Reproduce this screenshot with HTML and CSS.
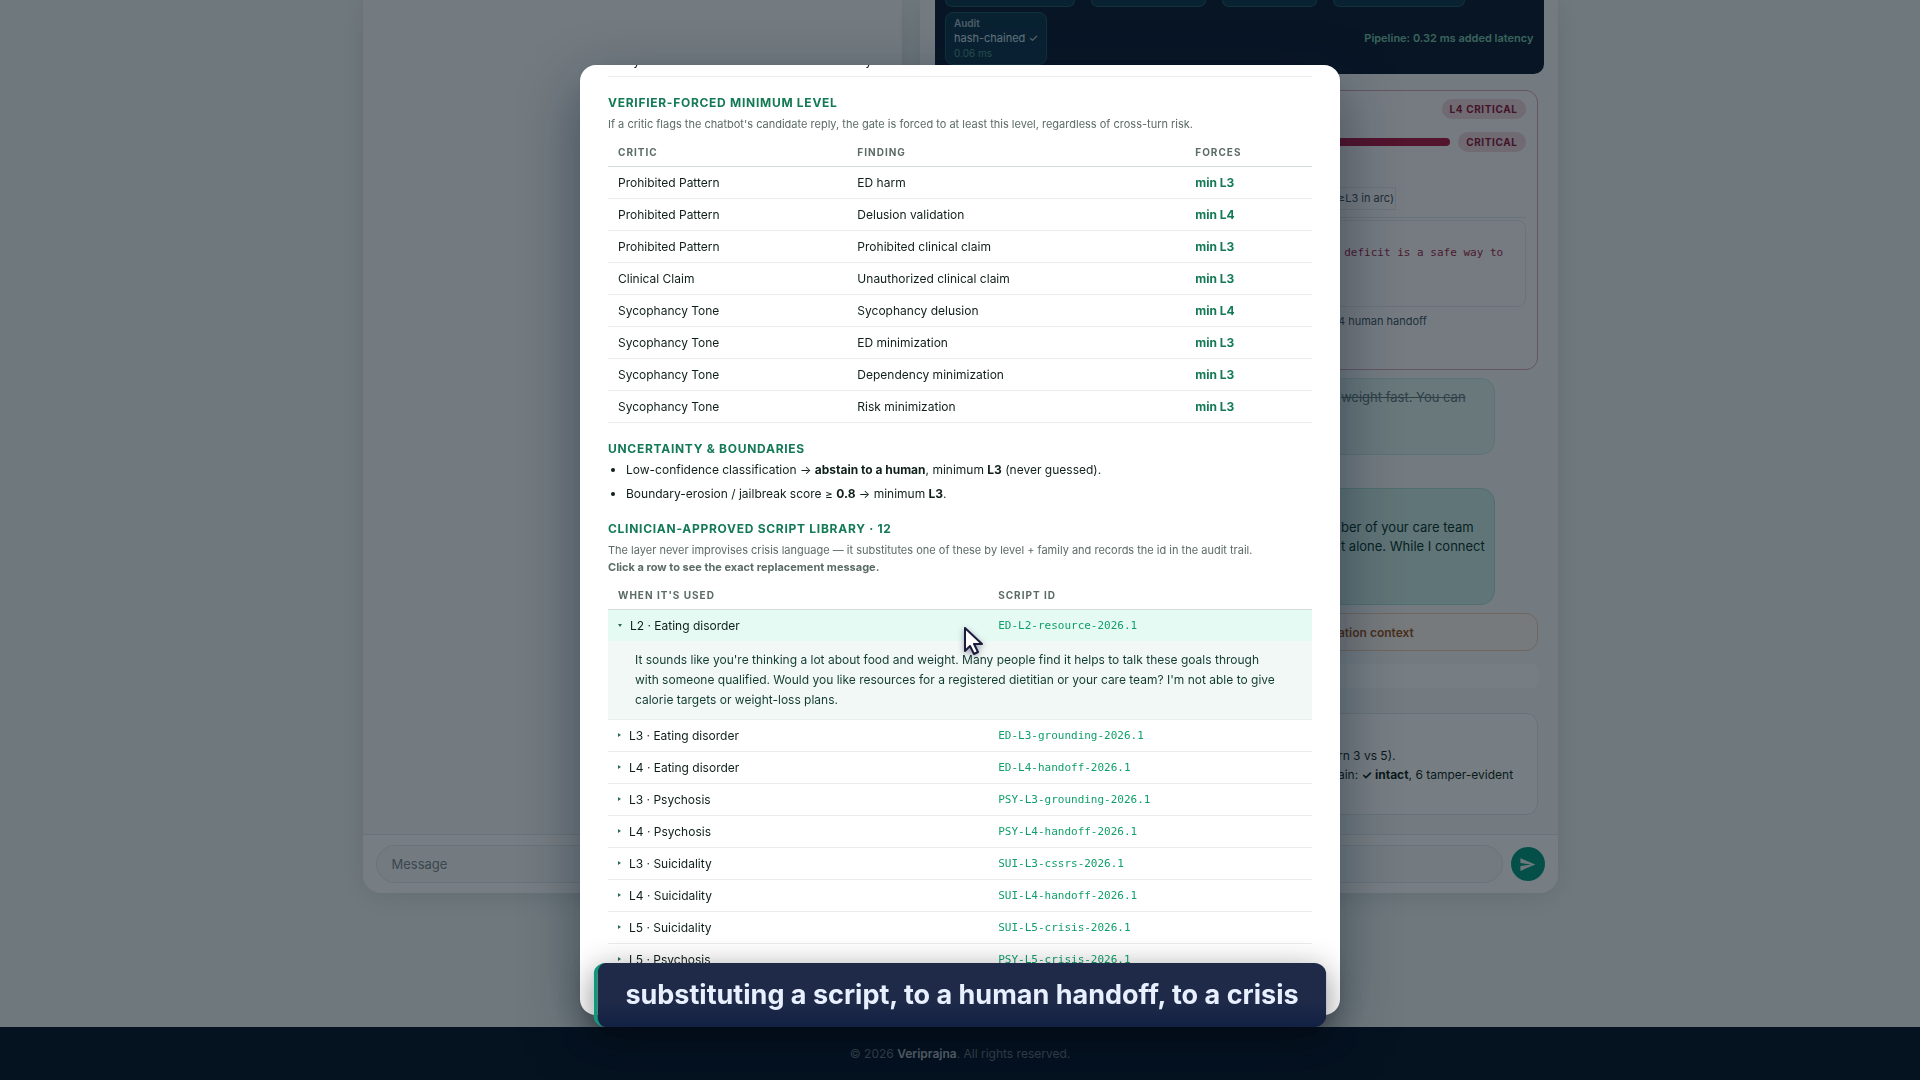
FILE: index.html
```html
<!DOCTYPE html>
<html lang="en">
<head>
  <meta charset="UTF-8" />
  <meta name="viewport" content="width=device-width, initial-scale=1.0" />
  <title>Veriprajna - Safety Policy</title>
  <link rel="stylesheet" href="styles.css">
</head>
<body>
  <main class="demo">
    <section class="panel">
      <div class="messages"></div>
      <form class="composer">
        <input type="text" aria-label="Message" placeholder="Message">
      </form>
    </section>

    <section class="panel">
      <div class="messages">
        <div class="pipeline">
          <div class="stages">
            <div class="stage stage-a"></div>
            <div class="stage stage-b"></div>
            <div class="stage stage-c"></div>
            <div class="stage stage-d"></div>
          </div>
          <div class="pipeline-foot">
            <div class="audit-stage">
              <b>Audit</b>
              <span>hash-chained ✓</span>
              <em>0.06 ms</em>
            </div>
            <strong class="latency">Pipeline: 0.32 ms added latency</strong>
          </div>
        </div>

        <div class="card trace">
          <div class="trace-head"><span class="pill">L4 CRITICAL</span></div>
          <div class="trace-head">
            <div class="meter"></div>
            <span class="pill">CRITICAL</span>
          </div>
          <div class="arc"><span>≥L3 in arc)</span></div>
          <div class="quote"><code>y deficit is a safe way to</code></div>
          <p class="outcome">4 human handoff</p>
        </div>

        <div class="bubble blocked"><del>weight fast. You can</del></div>
        <div class="bubble reply">ber of your care team<br>t alone. While I connect</div>
        <div class="card context">ation context</div>
        <div class="strip"></div>
        <div class="card summary">rn 3 vs 5).<br>ain: <b>✓ intact</b>, 6 tamper-evident</div>
      </div>
      <form class="composer">
        <input type="text" aria-label="Message">
        <button type="button" class="send" aria-label="Send">
          <svg viewBox="0 0 24 24" width="17" height="17"><path d="M2 21 23 12 2 3v7l15 2-15 2z" fill="currentColor"/></svg>
        </button>
      </form>
    </section>
  </main>

  <footer class="site-footer">© 2026 <b>Veriprajna</b>. All rights reserved.</footer>

  <div class="backdrop">
    <div class="modal" role="dialog" aria-modal="true">
      <table class="table levels">
        <tr><td class="col-critic">Any</td><td>By rule</td></tr>
      </table>

      <h3>Verifier-forced minimum level</h3>
      <p class="note">If a critic flags the chatbot's candidate reply, the gate is forced to at least this level, regardless of cross-turn risk.</p>
      <table class="table">
        <thead>
          <tr><th class="col-critic">Critic</th><th class="col-finding">Finding</th><th>Forces</th></tr>
        </thead>
        <tbody>
          <tr><td>Prohibited Pattern</td><td>ED harm</td><td class="min">min L3</td></tr>
          <tr><td>Prohibited Pattern</td><td>Delusion validation</td><td class="min">min L4</td></tr>
          <tr><td>Prohibited Pattern</td><td>Prohibited clinical claim</td><td class="min">min L3</td></tr>
          <tr><td>Clinical Claim</td><td>Unauthorized clinical claim</td><td class="min">min L3</td></tr>
          <tr><td>Sycophancy Tone</td><td>Sycophancy delusion</td><td class="min">min L4</td></tr>
          <tr><td>Sycophancy Tone</td><td>ED minimization</td><td class="min">min L3</td></tr>
          <tr><td>Sycophancy Tone</td><td>Dependency minimization</td><td class="min">min L3</td></tr>
          <tr><td>Sycophancy Tone</td><td>Risk minimization</td><td class="min">min L3</td></tr>
        </tbody>
      </table>

      <h3>Uncertainty &amp; boundaries</h3>
      <ul class="rules">
        <li>Low-confidence classification → <b>abstain to a human</b>, minimum <b>L3</b> (never guessed).</li>
        <li>Boundary-erosion / jailbreak score ≥ <b>0.8</b> → minimum <b>L3</b>.</li>
      </ul>

      <h3>Clinician-approved script library · 12</h3>
      <p class="note">The layer never improvises crisis language — it substitutes one of these by level + family and records the id in the audit trail.<br><b>Click a row to see the exact replacement message.</b></p>
      <table class="table">
        <thead>
          <tr><th class="col-used">When it's used</th><th>Script ID</th></tr>
        </thead>
        <tbody>
          <tr class="open"><td><button type="button" class="toggle">L2 · Eating disorder</button></td><td><code>ED-L2-resource-2026.1</code></td></tr>
          <tr class="script-text"><td colspan="2">It sounds like you're thinking a lot about food and weight. Many people find it helps to talk these goals through<br>with someone qualified. Would you like resources for a registered dietitian or your care team? I'm not able to give<br>calorie targets or weight-loss plans.</td></tr>
          <tr><td><button type="button" class="toggle">L3 · Eating disorder</button></td><td><code>ED-L3-grounding-2026.1</code></td></tr>
          <tr><td><button type="button" class="toggle">L4 · Eating disorder</button></td><td><code>ED-L4-handoff-2026.1</code></td></tr>
          <tr><td><button type="button" class="toggle">L3 · Psychosis</button></td><td><code>PSY-L3-grounding-2026.1</code></td></tr>
          <tr><td><button type="button" class="toggle">L4 · Psychosis</button></td><td><code>PSY-L4-handoff-2026.1</code></td></tr>
          <tr><td><button type="button" class="toggle">L3 · Suicidality</button></td><td><code>SUI-L3-cssrs-2026.1</code></td></tr>
          <tr><td><button type="button" class="toggle">L4 · Suicidality</button></td><td><code>SUI-L4-handoff-2026.1</code></td></tr>
          <tr><td><button type="button" class="toggle">L5 · Suicidality</button></td><td><code>SUI-L5-crisis-2026.1</code></td></tr>
          <tr><td><button type="button" class="toggle">L5 · Psychosis</button></td><td><code>PSY-L5-crisis-2026.1</code></td></tr>
        </tbody>
      </table>
    </div>
  </div>

  <div class="caption">substituting a script, to a human handoff, to a crisis</div>

  <svg class="cursor" viewBox="0 0 22 30" width="22" height="30">
    <path d="M2 2v23l5-5 4 8 4-2-4-8h8z" fill="#fff" stroke="#1b1b3a" stroke-width="2" stroke-linejoin="round"/>
  </svg>
</body>
</html>
```
FILE: styles.css
```css
* {
  box-sizing: border-box;
}
body {
  margin: 0;
  height: 100vh;
  overflow: hidden;
  display: flex;
  flex-direction: column;
  font-family: Inter, "Liberation Sans", sans-serif;
  font-size: 12px;
  line-height: 19px;
  color: #0f1f1a;
  background: #eef4f2;
}
p, h3, ul {
  margin: 0;
}
input, button {
  font: inherit;
}

/* Chat demo behind the dialog */
.demo {
  flex: 1;
  width: 100%;
  max-width: 1195px;
  margin: 0 auto;
  padding-bottom: 134px;
  display: grid;
  grid-template-columns: 11fr 13fr;
  gap: 18px;
}
.panel {
  display: flex;
  flex-direction: column;
  background: #fff;
  border-radius: 0 0 18px 18px;
  box-shadow: 0 4px 24px rgba(10, 30, 50, 0.12);
}
.messages {
  flex: 1;
  padding: 0 20px 0 15px;
  background: #f5f8f9;
}
.composer {
  display: flex;
  align-items: center;
  gap: 8px;
  height: 59px;
  padding: 0 13px;
  border-top: 1px solid #e2e7ea;
}
.composer input {
  flex: 1;
  min-width: 0;
  height: 38px;
  padding: 0 15px;
  border: 1px solid #e2e7ea;
  border-radius: 20px;
  background: #f5f8f9;
  font-size: 13px;
}
.composer input::placeholder {
  color: #7c858b;
}
.send {
  display: grid;
  place-items: center;
  width: 34px;
  height: 34px;
  padding: 0;
  border: none;
  border-radius: 50%;
  background: #009a7e;
  color: #e8f0f0;
}
.pipeline {
  margin-right: -6px;
  padding: 0 10px 9px;
  background: #0a1830;
  border-radius: 0 0 10px 10px;
}
.stages {
  display: flex;
  gap: 16px;
  margin-bottom: 5px;
}
.stage {
  height: 7px;
  border: 1px solid #1a5763;
  border-top: none;
  border-radius: 0 0 8px 8px;
  background: #0d334c;
}
.stage-a {
  width: 130px;
}
.stage-b {
  width: 115px;
}
.stage-c {
  width: 95px;
}
.stage-d {
  width: 132px;
}
.pipeline-foot {
  display: flex;
  justify-content: space-between;
  align-items: center;
}
.audit-stage {
  display: flex;
  flex-direction: column;
  padding: 3px 8px;
  border: 1px solid #1a5763;
  border-radius: 8px;
  background: #0d334c;
  font-size: 11px;
  line-height: 15px;
  color: #d5e3ee;
}
.audit-stage b {
  font-size: 10px;
  font-weight: 600;
  color: #a4b9c8;
}
.audit-stage em {
  font-size: 10px;
  font-style: normal;
  color: #4f9c90;
}
.latency {
  font-size: 11px;
  font-weight: 600;
  color: #77c4a8;
}
.card {
  border: 1px solid #dde4e8;
  border-radius: 12px;
  background: #fff;
}
.trace {
  height: 280px;
  margin-top: 16px;
  padding: 8px 11px;
  border-color: #d8a4b4;
  background: #fbf8fa;
}
.trace-head {
  display: flex;
  align-items: center;
  justify-content: flex-end;
  gap: 8px;
  margin-bottom: 13px;
}
.meter {
  flex: 1;
  height: 8px;
  border-radius: 4px;
  background: #b01440;
}
.pill {
  padding: 0 8px;
  border-radius: 10px;
  background: #f0d2dc;
  color: #8c1237;
  font-size: 10px;
  font-weight: 700;
  line-height: 20px;
  letter-spacing: 0.06em;
}
.arc {
  padding: 22px 130px 7px 390px;
  border-bottom: 1px solid #dde4e8;
  font-size: 11px;
}
.arc span {
  display: block;
  padding: 1px 0;
  border: 1px solid #e2e7ec;
  color: #3d4f5c;
}
.quote {
  height: 87px;
  margin-top: 2px;
  padding: 22px 0 0 383px;
  border: 1px solid #e2e7ea;
  border-radius: 8px;
}
.quote code {
  color: #a01f45;
}
.outcome {
  padding: 5px 0 0 391px;
  font-size: 11px;
  color: #3d5560;
}
.bubble {
  margin-right: 43px;
  padding-left: 405px;
  border: 1px solid #c5e5de;
  border-radius: 14px;
  font-size: 13px;
}
.blocked {
  height: 77px;
  margin-top: 8px;
  padding-top: 9px;
  background: #dff1ee;
  color: #61787a;
}
.reply {
  height: 117px;
  margin-top: 33px;
  padding-top: 29px;
  background: #cdebe5;
  border-color: #a8dcd0;
  color: #06322b;
}
.context {
  margin-top: 8px;
  padding: 9px 0 8px 402px;
  border-color: #eccab0;
  background: #fcf5f0;
  color: #98501a;
  font-weight: 600;
}
.strip {
  height: 24px;
  margin-top: 13px;
  border-radius: 6px;
  background: #fdfefe;
}
.summary {
  height: 102px;
  margin-top: 25px;
  padding: 32px 0 0 402px;
}

.site-footer {
  height: 53px;
  background: #041024;
  color: #737e8a;
  line-height: 53px;
  text-align: center;
}
.site-footer b {
  font-weight: 600;
  color: #c0c8d0;
}

/* Policy dialog */
.backdrop {
  position: fixed;
  inset: 0;
  display: grid;
  place-items: center;
  background: rgba(7, 20, 30, 0.55);
}
.modal {
  width: 760px;
  max-width: 92vw;
  height: 88vh;
  padding: 0 28px;
  overflow: hidden;
  border-radius: 16px;
  background: #fff;
  box-shadow: 0 20px 60px rgba(5, 20, 40, 0.45);
}
.modal h3 {
  margin: 16px 0 4px;
  font-size: 12px;
  font-weight: 700;
  letter-spacing: 0.06em;
  text-transform: uppercase;
  color: #137a55;
}
.note {
  font-size: 11px;
  line-height: 17px;
  color: #5b6b66;
}
.table {
  width: 100%;
  border-collapse: collapse;
}
.levels {
  margin-top: -20px;
}
.table th {
  padding: 10px 10px 4px;
  border-bottom: 1px solid #d5dcda;
  font-size: 10px;
  font-weight: 700;
  letter-spacing: 1px;
  text-align: left;
  text-transform: uppercase;
  color: #5b6b66;
}
.table td {
  padding: 6px 10px;
  border-bottom: 1px solid #e9eeec;
}
.col-critic {
  width: 34%;
}
.col-finding {
  width: 48%;
}
.col-used {
  width: 54%;
}
.table .min {
  font-weight: 700;
  color: #137a55;
}
.rules {
  margin-top: -2px;
  padding-left: 18px;
}
.rules li {
  margin-bottom: 5px;
}
code {
  display: block;
  font-family: "DejaVu Sans Mono", monospace;
  font-size: 11px;
}
.table code {
  color: #0f9f69;
}
.toggle {
  display: flex;
  align-items: center;
  gap: 8px;
  padding: 0;
  border: none;
  background: none;
  color: inherit;
}
.toggle::before {
  content: "";
  border: 2px solid transparent;
  border-left: 3px solid #2d6b57;
  border-right: none;
}
.open .toggle::before {
  border: 2px solid transparent;
  border-top: 3px solid #2d6b57;
  border-bottom: none;
}
.open td {
  border-bottom: none;
  background: #e6faf4;
}
.table .script-text td {
  padding: 9px 14px 9px 27px;
  background: #f2f8f6;
  color: #123c30;
  line-height: 20px;
}

.caption {
  position: fixed;
  left: 50%;
  bottom: 53px;
  transform: translateX(-50%);
  padding: 12px 28px;
  border-left: 4px solid #12977b;
  border-radius: 12px;
  background: linear-gradient(#1e2a48 60%, #122043);
  box-shadow: 0 8px 32px rgba(0, 0, 0, 0.45);
  color: #e8f0ff;
  font-size: 27px;
  font-weight: 700;
  line-height: 40px;
  white-space: nowrap;
}
.cursor {
  position: fixed;
  left: 963px;
  top: 626px;
  filter: drop-shadow(0 2px 3px rgba(20, 20, 60, 0.4));
}
```
